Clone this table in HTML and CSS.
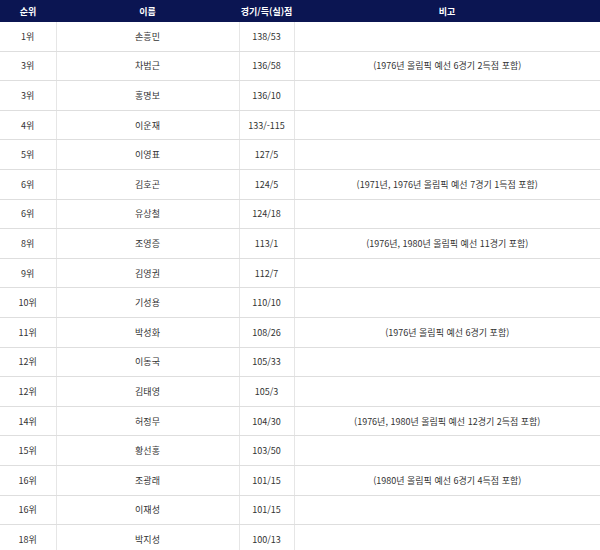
FILE: index.html
```html
<!DOCTYPE html>
<html lang="ko">
<head>
<meta charset="utf-8">
<link rel="stylesheet" href="styles.css">
</head>
<body>
<table class="rank">
  <colgroup>
    <col class="c-rank"><col class="c-name"><col class="c-stat"><col class="c-note">
  </colgroup>
  <thead>
    <tr><th>순위</th><th>이름</th><th>경기/득(실)점</th><th>비고</th></tr>
  </thead>
  <tbody>
    <tr><td>1위</td><td>손흥민</td><td>138/53</td><td></td></tr>
    <tr><td>3위</td><td>차범근</td><td>136/58</td><td>(1976년 올림픽 예선 6경기 2득점 포함)</td></tr>
    <tr><td>3위</td><td>홍명보</td><td>136/10</td><td></td></tr>
    <tr><td>4위</td><td>이운재</td><td>133/-115</td><td></td></tr>
    <tr><td>5위</td><td>이영표</td><td>127/5</td><td></td></tr>
    <tr><td>6위</td><td>김호곤</td><td>124/5</td><td>(1971년, 1976년 올림픽 예선 7경기 1득점 포함)</td></tr>
    <tr><td>6위</td><td>유상철</td><td>124/18</td><td></td></tr>
    <tr><td>8위</td><td>조영증</td><td>113/1</td><td>(1976년, 1980년 올림픽 예선 11경기 포함)</td></tr>
    <tr><td>9위</td><td>김영권</td><td>112/7</td><td></td></tr>
    <tr><td>10위</td><td>기성용</td><td>110/10</td><td></td></tr>
    <tr><td>11위</td><td>박성화</td><td>108/26</td><td>(1976년 올림픽 예선 6경기 포함)</td></tr>
    <tr><td>12위</td><td>이동국</td><td>105/33</td><td></td></tr>
    <tr><td>12위</td><td>김태영</td><td>105/3</td><td></td></tr>
    <tr><td>14위</td><td>허정무</td><td>104/30</td><td>(1976년, 1980년 올림픽 예선 12경기 2득점 포함)</td></tr>
    <tr><td>15위</td><td>황선홍</td><td>103/50</td><td></td></tr>
    <tr><td>16위</td><td>조광래</td><td>101/15</td><td>(1980년 올림픽 예선 6경기 4득점 포함)</td></tr>
    <tr><td>16위</td><td>이재성</td><td>101/15</td><td></td></tr>
    <tr><td>18위</td><td>박지성</td><td>100/13</td><td></td></tr>
  </tbody>
</table>
</body>
</html>
```
FILE: styles.css
```css
html, body {
  margin: 0;
  padding: 0;
  background: #ffffff;
}
.rank {
  width: 600px;
  border-collapse: collapse;
  table-layout: fixed;
  font-family: "Noto Sans CJK KR", "Noto Sans", sans-serif;
  font-size: 9px;
  color: #333333;
}
.c-rank { width: 56px; }
.c-name { width: 183px; }
.c-stat { width: 55px; }
.c-note { width: 306px; }
.rank th {
  background: #0b1552;
  color: #ffffff;
  font-weight: 700;
  height: 22px;
  padding: 0;
  text-align: center;
  line-height: 13px;
  white-space: nowrap;
}
.rank td {
  height: 28.6px;
  padding: 0;
  text-align: center;
  white-space: nowrap;
  border-bottom: 1px solid #dedede;
  border-left: 1px solid #e6e6e6;
  line-height: 13px;
}
.rank td:first-child { border-left: none; }
```
